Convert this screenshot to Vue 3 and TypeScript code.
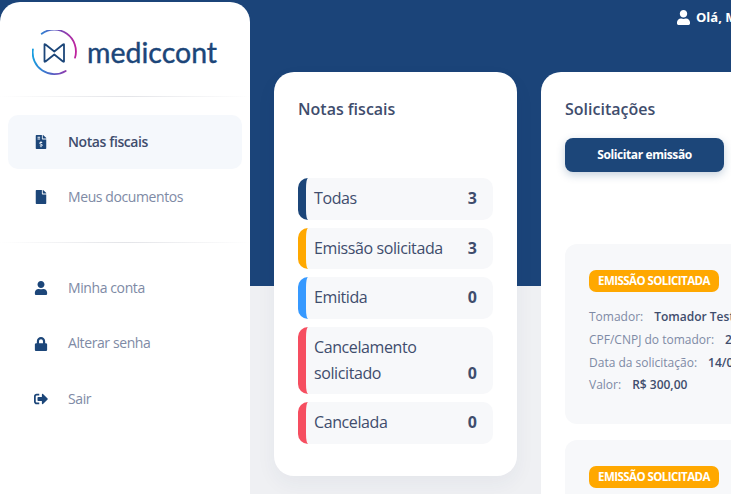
<template>
  <div class="page">
    <aside class="sidebar">
      <div class="brand">
        <svg class="brand-mark" viewBox="0 0 46 46" width="46" height="46" fill="none">
          <defs>
            <linearGradient id="ring" gradientUnits="userSpaceOnUse" x1="0" y1="0" x2="45" y2="0">
              <stop offset="0" stop-color="#159fe0" />
              <stop offset="0.5" stop-color="#5a58c0" />
              <stop offset="1" stop-color="#c4209c" />
            </linearGradient>
          </defs>
          <path d="M9.700 3.700A21.700 21.700 0 0 1 43 27.700" stroke="url(#ring)" stroke-width="1.800" stroke-linecap="round" />
          <path d="M33.700 41A21.700 21.700 0 0 1 .9 19.300" stroke="url(#ring)" stroke-width="1.800" stroke-linecap="round" />
          <path d="M12.500 14.500Q12.500 14 13.500 14.500L22.300 21.500 31 14.500Q32 14 32 14.500V31.500Q32 32 31 31.500L22.300 24.500 13.500 31.500Q12.500 32 12.500 31.500Z" stroke="#1c4679" stroke-width="1.800" stroke-linejoin="round" />
        </svg>
        <span class="brand-name">mediccont</span>
      </div>

      <nav class="nav first">
        <a v-for="item in mainNav" :key="item.label" class="nav-item" :class="{ active: item.active }">
          <svg class="nav-icon" :viewBox="item.box" fill="currentColor"><path :d="item.path" /></svg>
          <span class="nav-label">{{ item.label }}</span>
        </a>
      </nav>

      <nav class="nav second">
        <a v-for="item in accountNav" :key="item.label" class="nav-item">
          <svg class="nav-icon" :viewBox="item.box" fill="currentColor"><path :d="item.path" /></svg>
          <span class="nav-label">{{ item.label }}</span>
        </a>
      </nav>
    </aside>

    <main class="main">
      <header class="topbar">
        <svg class="user-icon" viewBox="0 0 448 512" fill="currentColor"><path :d="icons.user" /></svg>
        <span>Olá, Médico Teste</span>
      </header>

      <div class="columns">
        <section class="card summary">
          <h2>Notas fiscais</h2>
          <ul class="status-list">
            <li v-for="row in statuses" :key="row.label" class="status-row" :style="{ borderLeftColor: row.color }">
              <span class="status-label">{{ row.label }}</span>
              <strong>{{ row.count }}</strong>
            </li>
          </ul>
        </section>

        <section class="card requests">
          <h2>Solicitações</h2>
          <button class="primary" type="button">Solicitar emissão</button>

          <article v-for="n in 2" :key="n" class="request">
            <span class="badge">EMISSÃO SOLICITADA</span>
            <dl>
              <div v-for="field in fields" :key="field.name" class="field">
                <dt>{{ field.name }}</dt>
                <dd>{{ field.value }}</dd>
              </div>
            </dl>
          </article>
        </section>
      </div>
    </main>
  </div>
</template>

<script setup lang="ts">
interface NavItem {
  label: string
  box: string
  path: string
  active?: boolean
}

const icons = {
  invoice:
    'M377 105L279.100 7c-4.500-4.500-10.600-7-17-7H256v128h128v-6.100c0-6.300-2.500-12.400-7-16.900zm-153 31V0H24C10.700 0 0 10.700 0 24v464c0 13.300 10.700 24 24 24h336c13.300 0 24-10.700 24-24V160H248c-13.200 0-24-10.800-24-24zM64 72c0-4.420 3.580-8 8-8h80c4.420 0 8 3.580 8 8v16c0 4.420-3.580 8-8 8H72c-4.420 0-8-3.580-8-8V72zm0 80v-16c0-4.420 3.580-8 8-8h80c4.420 0 8 3.580 8 8v16c0 4.420-3.580 8-8 8H72c-4.420 0-8-3.580-8-8zm144 263.880V440c0 4.420-3.580 8-8 8h-16c-4.420 0-8-3.580-8-8v-24.290c-11.290-.58-22.270-4.520-31.370-11.350-3.900-2.930-4.100-8.770-.57-12.140l11.750-11.210c2.770-2.640 6.890-2.760 10.130-.73 3.870 2.420 8.260 3.720 12.820 3.720h28.110c6.500 0 11.800-5.920 11.800-13.190 0-5.950-3.610-11.190-8.770-12.730l-45-13.500c-18.590-5.580-31.580-23.420-31.580-43.390 0-24.520 19.050-44.440 42.670-45.070V232c0-4.420 3.580-8 8-8h16c4.420 0 8 3.580 8 8v24.290c11.290.58 22.270 4.510 31.370 11.350 3.900 2.930 4.100 8.770.57 12.140l-11.750 11.210c-2.770 2.640-6.890 2.760-10.130.73-3.870-2.430-8.260-3.720-12.820-3.720h-28.110c-6.500 0-11.800 5.920-11.800 13.190 0 5.950 3.610 11.190 8.770 12.730l45 13.500c18.590 5.580 31.580 23.420 31.580 43.390 0 24.530-19.050 44.440-42.670 45.070z',
  file: 'M224 136V0H24C10.700 0 0 10.700 0 24v464c0 13.300 10.700 24 24 24h336c13.300 0 24-10.700 24-24V160H248c-13.200 0-24-10.800-24-24zm160-14.100v6.100H256V0h6.100c6.400 0 12.500 2.500 17 7l97.900 98c4.500 4.500 7 10.600 7 16.900z',
  user: 'M224 256c70.700 0 128-57.300 128-128S294.700 0 224 0 96 57.300 96 128s57.300 128 128 128zm89.600 32h-16.700c-22.200 10.200-46.900 16-72.900 16s-50.600-5.800-72.900-16h-16.700C60.200 288 0 348.200 0 422.400V464c0 26.500 21.500 48 48 48h352c26.500 0 48-21.500 48-48v-41.600c0-74.200-60.200-134.400-134.400-134.400z',
  lock: 'M400 224h-24v-72C376 68.200 307.800 0 224 0S72 68.200 72 152v72H48c-26.500 0-48 21.500-48 48v192c0 26.500 21.500 48 48 48h352c26.500 0 48-21.500 48-48V272c0-26.500-21.500-48-48-48zm-104 0H152v-72c0-39.700 32.300-72 72-72s72 32.300 72 72v72z',
  exit: 'M497 273L329 441c-15 15-41 4.500-41-17v-96H152c-13.300 0-24-10.700-24-24v-96c0-13.300 10.700-24 24-24h136V88c0-21.400 25.900-32 41-17l168 168c9.300 9.400 9.300 24.600 0 34zM192 436v-40c0-6.600-5.400-12-12-12H96c-17.700 0-32-14.300-32-32V160c0-17.700 14.300-32 32-32h84c6.600 0 12-5.400 12-12V76c0-6.600-5.400-12-12-12H96c-53 0-96 43-96 96v192c0 53 43 96 96 96h84c6.600 0 12-5.400 12-12z'
}

const mainNav: NavItem[] = [
  { label: 'Notas fiscais', box: '0 0 384 512', path: icons.invoice, active: true },
  { label: 'Meus documentos', box: '0 0 384 512', path: icons.file }
]

const accountNav: NavItem[] = [
  { label: 'Minha conta', box: '0 0 448 512', path: icons.user },
  { label: 'Alterar senha', box: '0 0 448 512', path: icons.lock },
  { label: 'Sair', box: '0 0 512 512', path: icons.exit }
]

const statuses = [
  { label: 'Todas', count: 3, color: '#1c4679' },
  { label: 'Emissão solicitada', count: 3, color: '#ffa800' },
  { label: 'Emitida', count: 0, color: '#3699ff' },
  { label: 'Cancelamento solicitado', count: 0, color: '#f64e60' },
  { label: 'Cancelada', count: 0, color: '#f64e60' }
]

const fields = [
  { name: 'Tomador:', value: 'Tomador Teste' },
  { name: 'CPF/CNPJ do tomador:', value: '25.123.456/0001-10' },
  { name: 'Data da solicitação:', value: '14/04/2021' },
  { name: 'Valor:', value: 'R$ 300,00' }
]
</script>

<style>
html,
body {
  margin: 0;
  overflow: hidden;
}
</style>

<style scoped>
.page {
  display: flex;
  width: 1100px;
  height: 494px;
  overflow: hidden;
  background: linear-gradient(#1b4479 0 286px, #eff0f3 286px);
  font-family: "Open Sans", sans-serif;
  color: #3f4d6d;
}

.sidebar {
  flex: 0 0 250px;
  height: 492px;
  margin-top: 2px;
  background: #fff;
  border-radius: 20px 20px 0 0;
}

.brand {
  display: flex;
  align-items: center;
  gap: 9px;
  height: 95px;
  padding: 7px 0 0 32px;
  box-sizing: border-box;
  border-bottom: 1px solid transparent;
  border-image: linear-gradient(90deg, #fff, #e3e4e8 50%, #fff) 1;
}

.brand-mark {
  flex: none;
}

.brand-name {
  font-family: Lato, sans-serif;
  font-size: 28.500px;
  font-weight: 400;
  line-height: 1;
  color: #1c4679;
  -webkit-text-stroke: 0.4px #1c4679;
}

.nav {
  display: flex;
  flex-direction: column;
  padding: 0 8px;
}

.nav.first {
  gap: 1px;
  height: 146px;
  padding-top: 18px;
  box-sizing: border-box;
  border-bottom: 1px solid transparent;
  border-image: linear-gradient(90deg, #fff, #e3e4e8 50%, #fff) 1;
}

.nav.second {
  gap: 1.500px;
  padding-top: 18px;
}

.nav-item {
  display: flex;
  align-items: center;
  height: 54px;
  padding-left: 25.500px;
  border-radius: 10px;
  font-size: 14px;
  letter-spacing: -0.4px;
  color: #7e8aa5;
}

.nav-label {
  padding-bottom: 2px;
}

.nav-item.active {
  background: #f5f8fc;
  color: #3f4d6d;
  font-weight: 600;
}

.nav-icon {
  flex: none;
  width: 14px;
  height: 14px;
  margin-right: 20.500px;
  color: #1c4679;
}

.main {
  flex: 1;
  padding: 0 24px;
}

.topbar {
  display: flex;
  align-items: center;
  height: 34px;
  padding-left: 403px;
  color: #fff;
  font-size: 13px;
  font-weight: 700;
  white-space: nowrap;
}

.user-icon {
  width: 13px;
  height: 15px;
  margin-right: 6px;
}

.columns {
  display: flex;
  align-items: flex-start;
  gap: 24px;
  margin-top: 38px;
}

.card {
  box-sizing: border-box;
  background: #fff;
  border-radius: 20px;
  padding: 24px;
}

.card h2 {
  margin: 0;
  font-size: 16px;
  font-weight: 600;
  line-height: 26px;
  color: #3f4d6d;
}

.summary {
  flex: 0 0 243px;
  height: 404px;
  box-shadow: 0 8px 20px rgba(30, 50, 90, 0.05);
}

.status-list {
  display: flex;
  flex-direction: column;
  gap: 8px;
  margin: 56.300px 0 0;
  padding: 0;
  list-style: none;
}

.status-row {
  display: flex;
  justify-content: space-between;
  align-items: flex-end;
  gap: 10px;
  padding: 8px 16px 8px 8px;
  background: #f7f8fa;
  border-left: 8px solid;
  border-radius: 10px;
  font-size: 16px;
  line-height: 25.600px;
}

.status-label {
  letter-spacing: -0.4px;
}

.status-row strong {
  font-weight: 700;
}

.requests {
  flex: 0 0 520px;
  height: 600px;
}

.primary {
  display: block;
  width: 159px;
  height: 34px;
  margin-top: 16px;
  padding: 0 0 2px;
  border: 0;
  border-radius: 8px;
  background: #1c4679;
  box-shadow: 0 3px 8px rgba(28, 70, 121, 0.25);
  color: #fff;
  font-family: inherit;
  font-size: 12px;
  font-weight: 700;
  letter-spacing: -0.4px;
}

.request {
  height: 179.500px;
  box-sizing: border-box;
  margin-top: 72px;
  padding: 26px 24px;
  background: #f7f8fa;
  border-radius: 12px;
}

.request + .request {
  margin-top: 16px;
}

.badge {
  display: block;
  width: fit-content;
  padding: 0 9px;
  border-radius: 7px;
  background: #ffa800;
  color: #fff;
  font-size: 11.500px;
  font-weight: 700;
  letter-spacing: -0.55px;
  line-height: 22px;
}

dl {
  margin: 14px 0 0;
}

.field {
  display: flex;
  gap: 11px;
  font-size: 12px;
  line-height: 22.800px;
}

dt {
  color: #7e8aa5;
}

dd {
  margin: 0;
  color: #3f4d6d;
  font-weight: 600;
}
</style>
